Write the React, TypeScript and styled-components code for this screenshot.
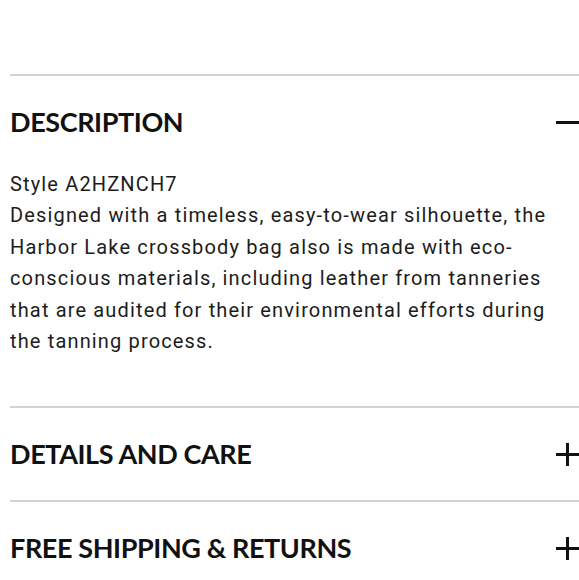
import React, { useState } from "react"
import styled, { createGlobalStyle } from "styled-components"

const GlobalStyle = createGlobalStyle`
  html, body {
    margin: 0;
    padding: 0;
    background: #ffffff;
    overflow: hidden;
  }
`

type Section = {
  title: string
  content?: string[]
}

const sections: Section[] = [
  {
    title: "DESCRIPTION",
    content: [
      "Style A2HZNCH7",
      "Designed with a timeless, easy-to-wear silhouette, the Harbor Lake crossbody bag also is made with eco-conscious materials, including leather from tanneries that are audited for their environmental efforts during the tanning process.",
    ],
  },
  { title: "DETAILS AND CARE" },
  { title: "FREE SHIPPING & RETURNS" },
]

const ToggleIcon = ({ open }: { open: boolean }) => (
  <svg width="23" height="23" viewBox="0 0 23 23">
    <line x1="0" y1="11.5" x2="23" y2="11.5" stroke="#111" strokeWidth="3" />
    {!open && (
      <line x1="11.5" y1="0" x2="11.5" y2="23" stroke="#111" strokeWidth="3" />
    )}
  </svg>
)

const App = () => {
  const [openIndex, setOpenIndex] = useState<number | null>(0)

  return (
    <Page>
      <GlobalStyle />
      <Accordion>
        {sections.map((section, i) => {
          const open = openIndex === i
          return (
            <Item key={section.title}>
              <Header onClick={() => setOpenIndex(open ? null : i)}>
                <Title>{section.title}</Title>
                <IconWrap>
                  <ToggleIcon open={open} />
                </IconWrap>
              </Header>
              {open && section.content && (
                <Body>
                  {section.content.map(line => (
                    <p key={line}>{line}</p>
                  ))}
                </Body>
              )}
            </Item>
          )
        })}
      </Accordion>
    </Page>
  )
}

export default App

const Page = styled.div`
  padding: 74px 0 0 10px;
`

const Accordion = styled.div`
  width: 570px;
`

const Item = styled.section`
  border-top: 2px solid #d3d3d3;
`

const Header = styled.div`
  display: flex;
  align-items: center;
  justify-content: space-between;
  height: 92px;
  cursor: pointer;
`

const Title = styled.h3`
  margin: 0 0 2px;
  font-family: "Lato", sans-serif;
  font-weight: 700;
  font-size: 27px;
  letter-spacing: -0.4px;
  color: #111111;
`

const IconWrap = styled.span`
  display: flex;
  margin-right: 1px;
`

const Body = styled.div`
  padding: 1px 0 49px;
  font-family: "Roboto", sans-serif;
  font-size: 20px;
  line-height: 31.4px;
  letter-spacing: 1.15px;
  color: #1c1c1c;

  p {
    margin: 0;
  }
`
